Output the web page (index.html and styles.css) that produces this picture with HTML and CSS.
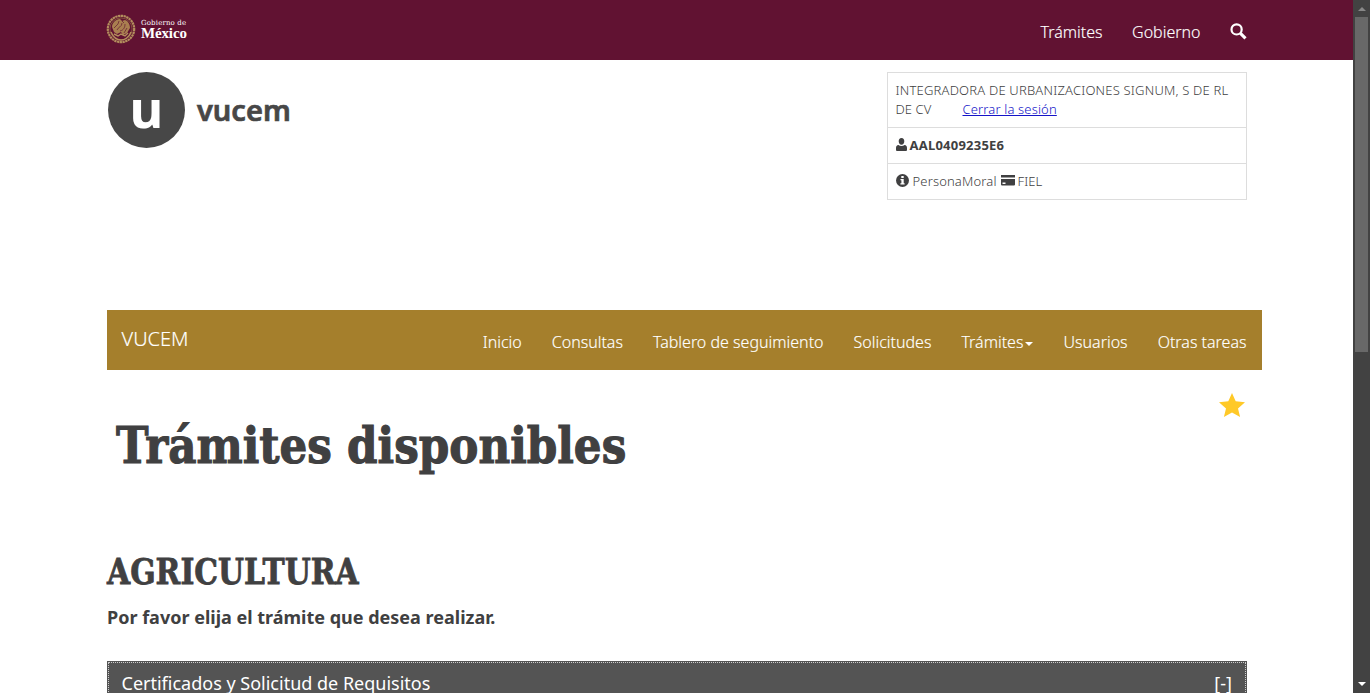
FILE: index.html
```html
<!DOCTYPE html>
<html lang="es">
<head>
<meta charset="utf-8">
<title>VUCEM - Trámites disponibles</title>
<link rel="stylesheet" href="styles.css">
</head>
<body>
<div class="page">
<header class="topbar">
  <div class="brand">
    <svg class="seal" viewBox="0 0 30 30">
      <circle cx="15" cy="15" r="13.2" fill="none" stroke="#b38e5d" stroke-width="2.2" stroke-dasharray="2.3 .5"/>
      <circle cx="15" cy="15" r="11.1" fill="none" stroke="#8d643f" stroke-width=".8"/>
      <path d="M6 13c0-4 4-8 8-8l2 2 3-1c3 1 5 4 5 8l-3 5-4 2-2-3-4 2-3-2z" fill="#a97f50"/>
      <path d="M8 14l4-4 1-3M11 16c1-3 5-3 5-7M14 17c4-1 5-4 5-7M18 19l3-5M16 7l2 2" fill="none" stroke="#6b2433" stroke-width=".8"/>
      <path d="M5 18c3 7 7 8 10 8s8-2 10-8M8 20l4 2 3-2 4 2 3-3" fill="none" stroke="#b38e5d" stroke-width="1.4"/>
    </svg>
    <div class="gov"><span class="gov-small">Gobierno de</span><span class="gov-big">México</span></div>
  </div>
  <nav class="topnav">
    <a>Trámites</a><a>Gobierno</a>
    <svg class="search" viewBox="0 0 17 17"><circle cx="6.600" cy="6.400" r="5.100" fill="none" stroke="#fff" stroke-width="2.200"/><path d="M10.500 10.300l5 5" stroke="#fff" stroke-width="3.100"/></svg>
  </nav>
</header>
<main class="container">
  <div class="masthead">
    <div class="logo"><span class="disc"><span class="u">u</span></span><span class="word">vucem</span></div>
    <div class="session">
      <div class="cell name"><span class="company">INTEGRADORA DE URBANIZACIONES SIGNUM, S DE RL</span><br><span class="cv">DE CV</span><a class="logout">Cerrar la sesión</a></div>
      <div class="cell"><svg class="i-user" viewBox="0 0 11 13"><path d="M5.500 0C7.400 0 8.300 1.300 8.300 3.200S7.200 6.700 5.500 6.700 2.700 5.100 2.700 3.200 3.600 0 5.500 0zM2.500 7c.8.7 1.800 1 3 1s2.200-.3 3-1C10.300 7.300 11 8.300 11 10v1.800c0 .8-.5 1.200-1.300 1.200H1.300C.5 13 0 12.600 0 11.800V10c0-1.700.7-2.700 2.500-3z" fill="#404041"/></svg><b class="rfc">AAL0409235E6</b></div>
      <div class="cell"><svg class="i-info" viewBox="0 0 13 13"><circle cx="6.500" cy="6.500" r="6.500" fill="#404041"/><path d="M5.300 2h2.400v2H5.300zM4.500 5h3.200v4.300h.9v1.200H4.400V9.300h1V6.200h-.9z" fill="#fff"/></svg><span class="persona">PersonaMoral</span><svg class="i-card" viewBox="0 0 14 11"><path d="M0 0h14v2.500H0zM0 4h14v5.500q0 1-1 1H1q-1 0-1-1z" fill="#404041"/><path d="M1.500 7.500h3v1.500h-3z" fill="#fff"/></svg><span class="fiel">FIEL</span></div>
    </div>
  </div>
  <nav class="menu">
    <span class="menu-brand">VUCEM</span>
    <div class="links"><a>Inicio</a><a>Consultas</a><a>Tablero de seguimiento</a><a>Solicitudes</a><a>Trámites<i class="caret"></i></a><a>Usuarios</a><a>Otras tareas</a></div>
  </nav>
  <div class="fav"><svg class="star" viewBox="0 0 26 24"><path d="M13 0l3.700 8.300 9.300 1-7 6.200 2.100 8.500L13 19.600 4.900 24 7 15.500 0 9.300l9.300-1z" fill="#ffc928"/></svg></div>
  <h1 class="title"><span>Trámites disponibles</span></h1>
  <h2 class="section"><span>AGRICULTURA</span></h2>
  <p class="prompt">Por favor elija el trámite que desea realizar.</p>
  <div class="panel"><span class="panel-title">Certificados y Solicitud de Requisitos</span><span class="toggle">[-]</span></div>
</main>
</div>
<div class="scroll"><i class="up"></i><i class="thumb"></i><i class="down"></i></div>
</body>
</html>
```
FILE: styles.css
```css
* { box-sizing: border-box; }
body { margin: 0; height: 693px; display: flex; overflow: hidden; background: #fff; color: #404041; font-family: "Noto Sans", "Open Sans", sans-serif; font-weight: 300; }
.page { width: 1353px; height: 693px; overflow: hidden; }
.topbar { height: 60px; padding: 0 106px; background: #611232; display: flex; justify-content: space-between; }
.brand { display: flex; padding-top: 14px; }
.seal { width: 30px; height: 30px; }
.gov { display: flex; flex-direction: column; color: #fff; font-family: "Liberation Serif", serif; font-weight: 700; margin-left: 5px; padding-top: 5px; }
.gov-small { font: 400 7px/8px "DejaVu Serif", serif; letter-spacing: .15px; white-space: nowrap; }
.gov-big { font-size: 15px; line-height: 12px; letter-spacing: -.15px; }
.topnav { display: flex; color: #fff; font-size: 16px; line-height: 22px; padding-top: 21px; gap: 30px; -webkit-text-stroke: .15px #fff; }
.topnav a:first-child { margin-right: -.5px; }
.search { width: 17px; height: 17px; margin: 2px 0 0 -.5px; }
.container { width: 1155px; margin-left: 107px; }
.masthead { height: 250px; padding-top: 12px; display: flex; justify-content: space-between; align-items: flex-start; }
.logo { display: flex; }
.disc { width: 77px; height: 76px; margin-left: 1px; border-radius: 50%; background: #474747; color: #fff; display: flex; justify-content: center; }
.u { font: 700 52px/71px "Noto Sans", sans-serif; }
.word { margin-left: 12px; font: 600 29px/75px "Noto Sans", sans-serif; color: #474747; -webkit-text-stroke: .7px #474747; stroke-linejoin: round; }
.session { width: 360px; margin-right: 15px; border: 1px solid #ddd; font-size: 13px; line-height: 19px; }
.cell { height: 36px; padding: 8px 7px; border-top: 1px solid #ddd; display: flex; }
.name { height: 54px; border-top: 0; display: block; white-space: nowrap; }
.company { letter-spacing: .2px; margin-left: .5px; }
.cv { margin-left: .5px; letter-spacing: .1px; }
.logout { color: #1414c8; text-decoration: underline; margin-left: 31px; letter-spacing: .15px; }
.i-user { width: 11px; height: 13px; margin: 2px 3px 0 .5px; }
.rfc { font-weight: 700; letter-spacing: .23px; }
.i-info { width: 13px; height: 13px; margin: 2px 4px 0 .5px; }
.persona { letter-spacing: .15px; }
.i-card { width: 14px; height: 11px; margin: 3px 3px 0 4px; }
.menu { height: 60px; background: #a57f2c; color: #fff; display: flex; justify-content: space-between; padding: 0 15.500px 0 14.500px; -webkit-text-stroke: .15px #fff; }
.menu-brand { font-size: 20px; line-height: 28px; padding-top: 15px; }
.links { display: flex; gap: 30px; font-size: 16px; line-height: 22px; padding-top: 21px; white-space: nowrap; }
.caret { display: inline-block; border: 4px solid transparent; border-top-color: #fff; border-bottom: 0; margin-left: 2px; vertical-align: 2px; }
.fav { height: 50px; display: flex; justify-content: flex-end; padding: 23px 17px 0 0; }
.star { width: 26px; height: 24px; }
.title { margin: 0; padding-left: 9px; height: 130px; font: 700 51px/51px "DejaVu Serif", serif; white-space: nowrap; }
.title span, .section span { display: inline-block; transform-origin: left; }
.title span { transform: scaleX(.856); -webkit-text-stroke: 1.2px #404041; }
.section { margin: 0; height: 50px; font: 700 35px/43px "DejaVu Serif", serif; }
.section span { transform: scaleX(.852); -webkit-text-stroke: .8px #404041; }
.prompt { margin: 0; height: 61px; font-size: 18px; line-height: 34px; font-weight: 700; }
.panel { width: 1140px; height: 60px; background: #545454; color: #fff; outline: 1px dotted #ccc; outline-offset: -2px; padding: 10px 15px 0 14.500px; display: flex; justify-content: space-between; font-size: 18px; line-height: 24px; font-weight: 400; }
.scroll { width: 17px; height: 693px; background: #424242; display: flex; flex-direction: column; align-items: center; }
.up { height: 4px; margin-top: 7px; border: 4px solid transparent; border-bottom-color: #888; border-top: 0; }
.thumb { width: 13px; height: 335px; margin-top: 6px; background: #686868; }
.down { margin-top: 330px; border: 4px solid transparent; border-top-color: #fff; border-bottom: 0; }
```
